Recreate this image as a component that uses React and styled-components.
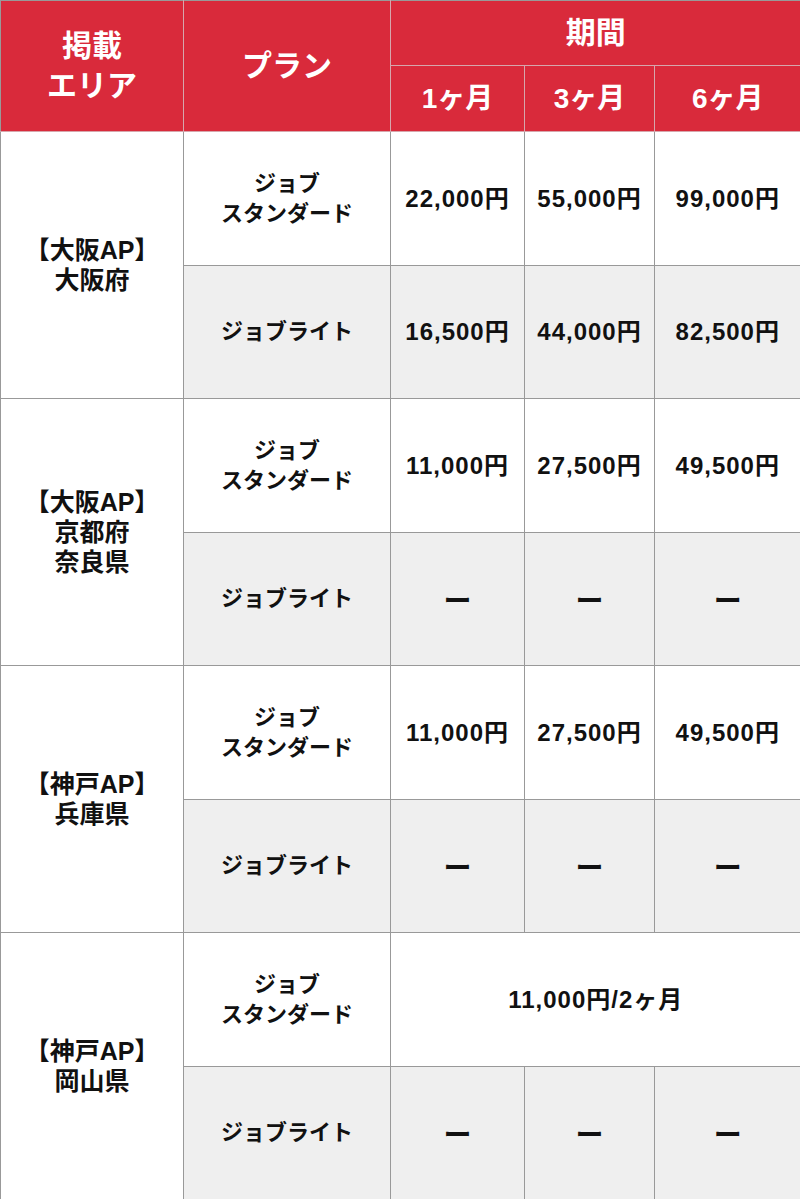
import React from "react";
import styled, { createGlobalStyle } from "styled-components";

const Global = createGlobalStyle`
  html, body { margin: 0; padding: 0; background: #fff; }
  body { font-family: "Liberation Sans", "Noto Sans CJK JP", sans-serif; }
`;

const Table = styled.table`
  width: 800px;
  table-layout: fixed;
  border-collapse: collapse;
  font-family: "Liberation Sans", "Noto Sans CJK JP", sans-serif;
  font-weight: 700;
  color: #111;
`;

const HeadCell = styled.th`
  background: #d92a3b;
  color: #fff;
  font-size: ${(p) => (p.$small ? 28 : 30)}px;
  line-height: 40px;
  font-weight: 700;
  text-align: center;
  vertical-align: middle;
  padding: 0;
  border: 1px solid #d6a6ac;
  border-top-color: #999;
  &:first-child { border-left-color: #999; }
  &:last-child { border-right: none; }
`;

const HeadRow = styled.tr`
  height: ${(p) => p.$h}px;
`;

const BodyRow = styled.tr`
  height: ${(p) => p.$h}px;
  background: ${(p) => (p.$gray ? "#efefef" : "#fff")};
`;

const Cell = styled.td`
  border: 1px solid #999;
  padding: 0;
  text-align: center;
  vertical-align: middle;
  font-size: 22px;
  line-height: 30px;
  &:last-child { border-right: none; }
`;

const AreaCell = styled(Cell)`
  background: #fff;
  font-size: 25px;
`;

const PriceCell = styled(Cell)`
  font-size: 24px;
  letter-spacing: 1px;
`;

const DashCell = styled(Cell)`
  font-family: "Noto Sans CJK JP", sans-serif;
  font-size: 28px;
`;

const data = [
  {
    area: ["【大阪AP】", "大阪府"],
    std: ["22,000円", "55,000円", "99,000円"],
    lite: ["16,500円", "44,000円", "82,500円"],
  },
  {
    area: ["【大阪AP】", "京都府", "奈良県"],
    std: ["11,000円", "27,500円", "49,500円"],
    lite: null,
  },
  {
    area: ["【神戸AP】", "兵庫県"],
    std: ["11,000円", "27,500円", "49,500円"],
    lite: null,
  },
  {
    area: ["【神戸AP】", "岡山県"],
    std: "11,000円/2ヶ月",
    lite: null,
  },
];

const Lines = ({ lines }) =>
  lines.map((l, i) => (
    <React.Fragment key={i}>
      {i > 0 && <br />}
      {l}
    </React.Fragment>
  ));

export default function App() {
  return (
    <>
      <Global />
      <Table>
        <colgroup>
          <col style={{ width: 183 }} />
          <col style={{ width: 207 }} />
          <col style={{ width: 134 }} />
          <col style={{ width: 130 }} />
          <col style={{ width: 146 }} />
        </colgroup>
        <thead>
          <HeadRow $h={65}>
            <HeadCell rowSpan={2}>
              掲載
              <br />
              エリア
            </HeadCell>
            <HeadCell rowSpan={2}>プラン</HeadCell>
            <HeadCell colSpan={3}>期間</HeadCell>
          </HeadRow>
          <HeadRow $h={66}>
            <HeadCell $small>1ヶ月</HeadCell>
            <HeadCell $small>3ヶ月</HeadCell>
            <HeadCell $small>6ヶ月</HeadCell>
          </HeadRow>
        </thead>
        <tbody>
          {data.map((d, i) => (
            <React.Fragment key={i}>
              <BodyRow $h={134}>
                <AreaCell rowSpan={2}>
                  <Lines lines={d.area} />
                </AreaCell>
                <Cell>
                  ジョブ
                  <br />
                  スタンダード
                </Cell>
                {Array.isArray(d.std) ? (
                  d.std.map((v, j) => <PriceCell key={j}>{v}</PriceCell>)
                ) : (
                  <PriceCell colSpan={3}>{d.std}</PriceCell>
                )}
              </BodyRow>
              <BodyRow $h={133} $gray>
                <Cell>ジョブライト</Cell>
                {d.lite
                  ? d.lite.map((v, j) => <PriceCell key={j}>{v}</PriceCell>)
                  : [0, 1, 2].map((j) => <DashCell key={j}>ー</DashCell>)}
              </BodyRow>
            </React.Fragment>
          ))}
        </tbody>
      </Table>
    </>
  );
}
